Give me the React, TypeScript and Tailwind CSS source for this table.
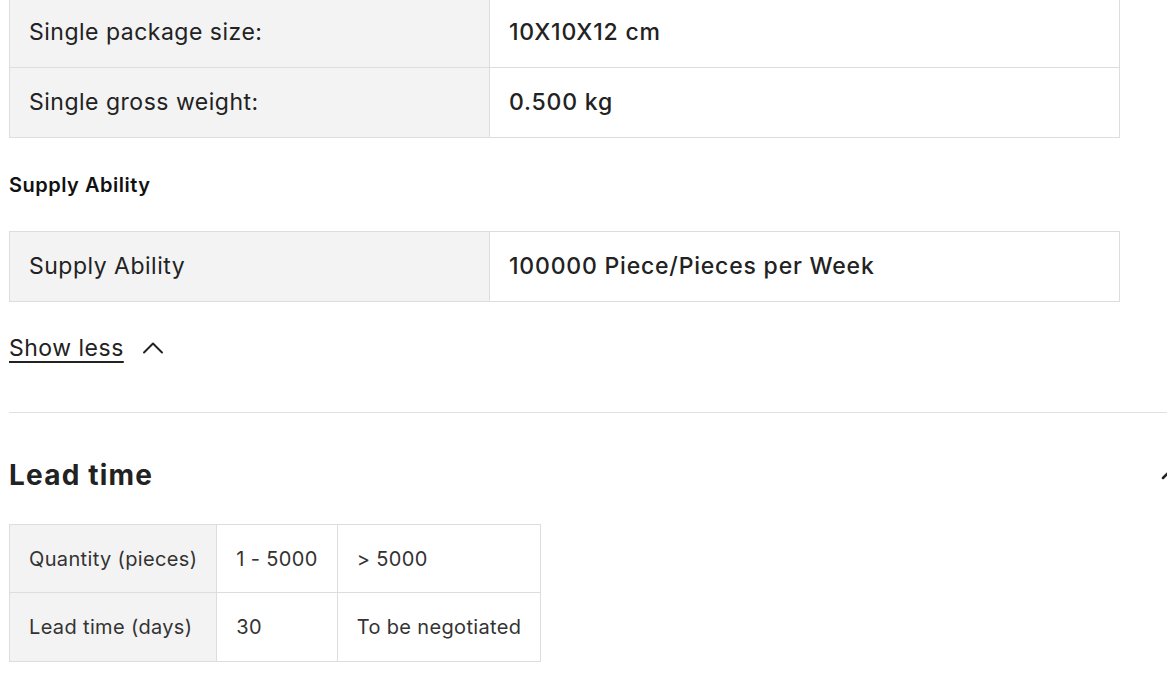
import { ChevronUp } from 'lucide-react'

const specRows = [
  { label: 'Single package size:', value: '10X10X12 cm' },
  { label: 'Single gross weight:', value: '0.500 kg' },
]

function SpecTable({ rows }: { rows: { label: string; value: string }[] }) {
  return (
    <table className="w-[1111px] border-collapse border border-[#dddddd]">
      <tbody>
        {rows.map(r => (
          <tr key={r.label} className="h-[70px]">
            <td className="w-[480px] border border-[#dddddd] bg-[#f3f3f3] px-[19px] text-[23px] tracking-[0.5px] text-[#222]">
              {r.label}
            </td>
            <td className="border border-[#dddddd] bg-white px-[19px] text-[23px] tracking-[0.8px] font-medium text-[#222]">
              {r.value}
            </td>
          </tr>
        ))}
      </tbody>
    </table>
  )
}

export default function App() {
  return (
    <div
      className="h-[675px] w-[1167px] overflow-hidden bg-white pl-[9px]"
      style={{ fontFamily: 'Inter, "Noto Sans", sans-serif' }}
    >
      {/* 包装 */}
      <div className="-mt-[3px]">
        <SpecTable rows={specRows} />
      </div>

      <h3 className="mt-[34px] text-[20px] font-semibold leading-[26px] tracking-[0.5px] text-[#111]">Supply Ability</h3>

      <div className="mt-[33px]">
        <SpecTable rows={[{ label: 'Supply Ability', value: '100000 Piece/Pieces per Week' }]} />
      </div>

      <button className="mt-[32px] flex h-[28px] items-center gap-[20px] text-[23px] leading-[28px] tracking-[0.5px] text-[#222]">
        <span className="underline underline-offset-[5px] decoration-[1.5px]">Show less</span>
        <ChevronUp size={36} strokeWidth={1.3} className="-mx-[9px] -my-[4px]" />
      </button>

      <div className="mt-[50px] border-t border-[#e0e0e0]" />

      {/* リードタイム */}
      <div className="mt-[44px] flex items-center justify-between">
        <h2 className="text-[28px] font-bold leading-[36px] tracking-[1.2px] text-[#222]">Lead time</h2>
        <ChevronUp size={24} strokeWidth={2.5} className="-mr-[14px] text-[#222]" />
      </div>

      <table className="mt-[31px] border-collapse border border-[#dddddd] text-[20px] tracking-[0.35px] text-[#333]">
        <tbody>
          <tr className="h-[68px]">
            <td className="border border-[#dddddd] bg-[#f3f3f3] px-[19px]">Quantity (pieces)</td>
            <td className="border border-[#dddddd] px-[19px]">1 - 5000</td>
            <td className="border border-[#dddddd] px-[19px]">&gt; 5000</td>
          </tr>
          <tr className="h-[69px]">
            <td className="border border-[#dddddd] bg-[#f3f3f3] px-[19px]">Lead time (days)</td>
            <td className="border border-[#dddddd] px-[19px]">30</td>
            <td className="border border-[#dddddd] px-[19px]">To be negotiated</td>
          </tr>
        </tbody>
      </table>
    </div>
  )
}
